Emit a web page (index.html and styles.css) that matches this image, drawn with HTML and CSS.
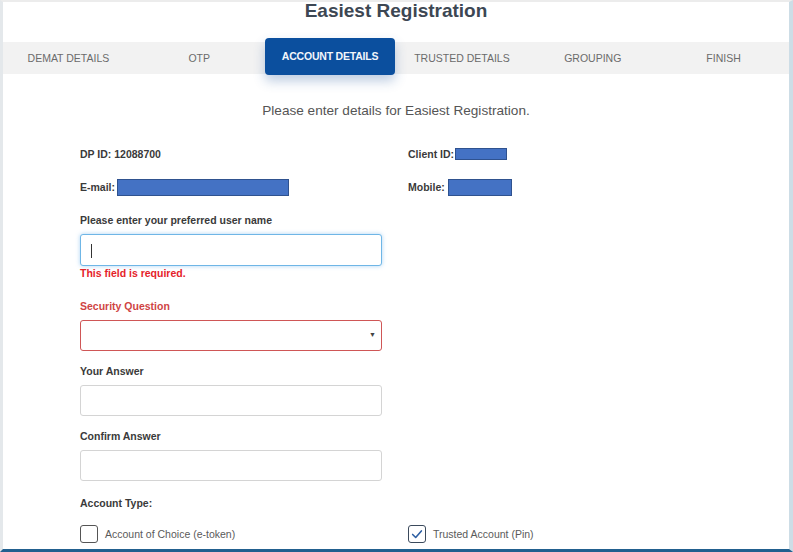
FILE: index.html
```html
<!DOCTYPE html>
<html>
<head>
<meta charset="utf-8">
<link rel="stylesheet" href="styles.css">
</head>
<body>
<div class="frame">
  <h1 class="title">Easiest Registration</h1>
  <nav class="tabs">
    <div class="tab">DEMAT DETAILS</div>
    <div class="tab">OTP</div>
    <div class="tab active">ACCOUNT DETAILS</div>
    <div class="tab">TRUSTED DETAILS</div>
    <div class="tab">GROUPING</div>
    <div class="tab">FINISH</div>
  </nav>
  <p class="subtitle">Please enter details for Easiest Registration.</p>
  <div class="form">
    <div class="info-grid">
      <div class="info">DP ID: 12088700</div>
      <div class="info">Client ID:<span class="redact r-client"></span></div>
      <div class="info">E-mail: <span class="redact r-email"></span></div>
      <div class="info">Mobile: <span class="redact r-mobile"></span></div>
    </div>
    <div class="field first">
      <label class="label">Please enter your preferred user name</label>
      <div class="input focus"><span class="caret"></span></div>
      <div class="error">This field is required.</div>
    </div>
    <div class="field">
      <label class="label invalid">Security Question</label>
      <div class="input select-invalid"><span class="arrow">▼</span></div>
    </div>
    <div class="field">
      <label class="label">Your Answer</label>
      <div class="input"></div>
    </div>
    <div class="field">
      <label class="label">Confirm Answer</label>
      <div class="input"></div>
    </div>
    <div class="label acct">Account Type:</div>
    <div class="check-grid">
      <div class="check"><span class="box"></span>Account of Choice (e-token)</div>
      <div class="check"><span class="box checked"><svg viewBox="0 0 16 16" width="14" height="14"><path d="M3 8.5 L6.5 12 L13 4.5" fill="none" stroke="#2d5fa3" stroke-width="1.8" stroke-linecap="round" stroke-linejoin="round"/></svg></span>Trusted Account (Pin)</div>
    </div>
  </div>
</div>
</body>
</html>
```

FILE: styles.css
```css
* { box-sizing: border-box; }
html, body { margin: 0; padding: 0; background: #fff; }
body {
  font-family: "Liberation Sans", Arial, sans-serif;
  width: 793px;
  height: 552px;
  overflow: hidden;
}
.frame {
  width: 793px;
  height: 552px;
  border-top: 2px solid #ececec;
  border-left: 3px solid #e4e8eb;
  border-right: 4px solid #cddde6;
  border-bottom: 3px solid #22608f;
  overflow: hidden;
}
.title {
  margin: 0;
  height: 40px;
  line-height: 18px;
  text-align: center;
  font-size: 19px;
  font-weight: bold;
  color: #3d4753;
}
.tabs {
  display: flex;
  height: 32px;
  background: #f2f2f2;
}
.tab {
  flex: 1 1 0;
  display: flex;
  align-items: center;
  justify-content: center;
  font-size: 10.5px;
  color: #6b6b6b;
}
.tab.active {
  height: 37px;
  margin-top: -4px;
  margin-right: 1px;
  background: #0b4f9e;
  color: #f2f6fb;
  border-radius: 4px;
  box-shadow: 0 6px 12px rgba(40, 90, 160, 0.3);
  font-weight: bold;
  letter-spacing: -0.2px;
  padding-bottom: 2px;
}
.subtitle {
  margin: 28px 0 0;
  line-height: 18px;
  text-align: center;
  font-size: 13.6px;
  color: #555;
}
.form {
  padding-left: 77px;
}
.info-grid {
  display: grid;
  grid-template-columns: 328px 1fr;
  row-gap: 19px;
  margin-top: 27px;
}
.info {
  display: flex;
  align-items: center;
  height: 14px;
  font-size: 10.5px;
  font-weight: bold;
  color: #3a3a3a;
}
.redact {
  display: inline-block;
  background: #4472c4;
  border: 1px solid #2f528f;
}
.r-client { width: 52px; height: 12px; margin-left: 1px; }
.r-email { width: 172px; height: 17px; margin-left: 2px; }
.r-mobile { width: 64px; height: 17px; margin-left: 3px; }
.field { width: 302px; }
.field.first { margin-top: 19px; }
.field + .field { margin-top: 13px; }
.label {
  display: block;
  height: 14px;
  line-height: 14px;
  font-size: 10.5px;
  font-weight: bold;
  color: #3a3a3a;
  margin-bottom: 7px;
}
.label.invalid { color: #cf4444; margin-top: 19px; }
.input {
  position: relative;
  height: 31px;
  border: 1px solid #d4d4d4;
  border-radius: 3px;
  background: #fff;
}
.input.focus {
  height: 32px;
  border-color: #6fb6e6;
  box-shadow: 0 0 4px rgba(102, 175, 233, 0.55);
}
.caret {
  position: absolute;
  left: 10px;
  top: 9px;
  width: 1px;
  height: 14px;
  background: #333;
}
.input.select-invalid { border-color: #cf5656; }
.arrow {
  position: absolute;
  right: 5px;
  top: 10px;
  font-size: 7px;
  color: #444;
}
.error {
  height: 14px;
  line-height: 14px;
  font-size: 10.5px;
  font-weight: bold;
  color: #e5222a;
}
.acct { margin-top: 15px; margin-bottom: 0; }
.check-grid {
  display: grid;
  grid-template-columns: 328px 1fr;
  margin-top: 15px;
}
.check {
  display: flex;
  align-items: center;
  font-size: 10.5px;
  color: #5a5a5a;
}
.box {
  width: 18px;
  height: 18px;
  border: 1.5px solid #555;
  border-radius: 3px;
  margin-right: 7px;
  display: flex;
  align-items: center;
  justify-content: center;
}
.box.checked { border-color: #3b4a5c; }
```
